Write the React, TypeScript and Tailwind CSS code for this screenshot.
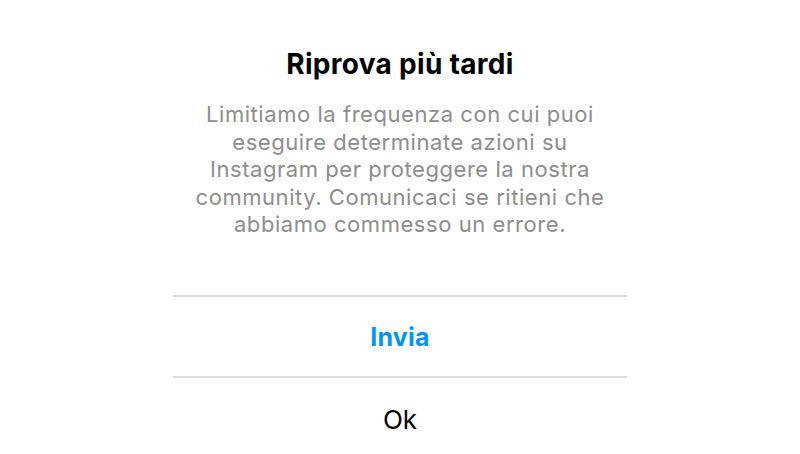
export default function App() {
  return (
    <div
      className="w-[800px] h-[454px] bg-white overflow-hidden flex justify-center"
      style={{ fontFamily: "Inter, 'Noto Sans', sans-serif" }}
    >
      <div className="w-[454px] flex flex-col">
        <div className="pt-[47px] flex flex-col items-center text-center">
          <h1 className="text-[28px] leading-[34px] font-bold text-black tracking-[0.3px] whitespace-nowrap">
            Riprova più tardi
          </h1>
          <p className="mt-[20px] text-[22px] leading-[27.5px] text-[#8e8e8e] tracking-[0.55px] whitespace-nowrap">
            Limitiamo la frequenza con cui puoi
            <br />
            eseguire determinate azioni su
            <br />
            Instagram per proteggere la nostra
            <br />
            community. Comunicaci se ritieni che
            <br />
            abbiamo commesso un errore.
          </p>
        </div>
        <div className="mt-[56px] border-t-[2px] border-[#dbdbdb] h-[83px] pt-[3px] flex items-center justify-center">
          <span className="text-[25px] font-bold text-[#0095f6] tracking-[0.2px]">Invia</span>
        </div>
        <div className="border-t-[2px] border-[#dbdbdb] h-[80px] pt-[8px] flex items-center justify-center">
          <span className="text-[26px] text-black">Ok</span>
        </div>
      </div>
    </div>
  );
}
